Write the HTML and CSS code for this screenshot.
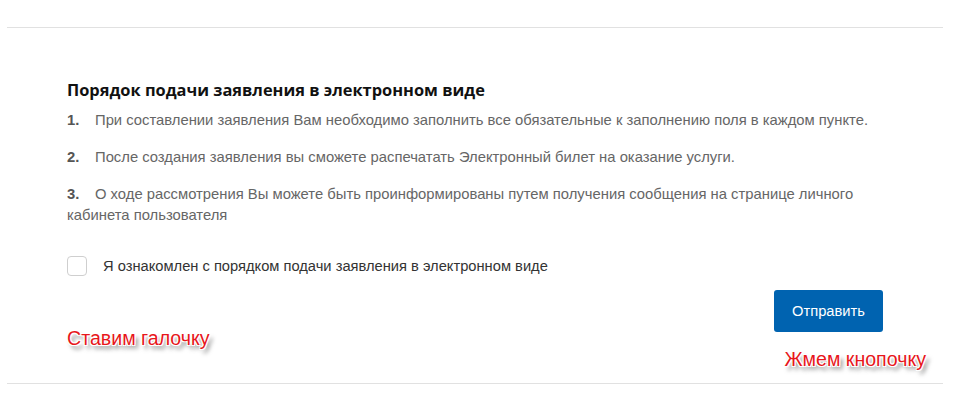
FILE: index.html
```html
<!DOCTYPE html>
<html>
<head>
  <meta charset="UTF-8">
  <title>Порядок подачи заявления</title>
  <link rel="stylesheet" href="styles.css">
</head>
<body>
  <div class="panel">
    <h2>Порядок подачи заявления в электронном виде</h2>
    <ol class="steps">
      <li><span class="num">1.</span>При составлении заявления Вам необходимо заполнить все обязательные к заполнению поля в каждом пункте.</li>
      <li><span class="num">2.</span>После создания заявления вы сможете распечатать Электронный билет на оказание услуги.</li>
      <li><span class="num">3.</span>О ходе рассмотрения Вы можете быть проинформированы путем получения сообщения на странице личного кабинета пользователя</li>
    </ol>
    <label class="agree">
      <span class="box"></span>
      Я ознакомлен с порядком подачи заявления в электронном виде
    </label>
    <div class="actions">
      <div class="note note-left">Ставим галочку</div>
      <div class="send">
        <button>Отправить</button>
        <div class="note">Жмем кнопочку</div>
      </div>
    </div>
  </div>
</body>
</html>
```

FILE: styles.css
```css
body {
  margin: 0;
  font-family: "Liberation Sans", Arial, sans-serif;
  background: #fff;
}
.panel {
  margin: 27px 23px 0 7px;
  border-top: 1px solid #e1e1e1;
  border-bottom: 1px solid #e1e1e1;
  padding: 50px 60px 0 60px;
}
h2 {
  margin: 0 0 9px;
  font-family: "Open Sans", sans-serif;
  font-weight: 700;
  font-size: 16.4px;
  color: #111;
}
.steps {
  list-style: none;
  margin: 0;
  padding: 0;
}
.steps li {
  font-size: 14.8px;
  line-height: 21px;
  color: #666;
  margin-bottom: 16px;
}
.num {
  display: inline-block;
  width: 28px;
  font-weight: bold;
  color: #555;
}
.agree {
  display: flex;
  align-items: center;
  font-size: 14.7px;
  color: #333;
  margin-top: 30px;
}
.box {
  width: 18px;
  height: 18px;
  border: 1px solid #cfcfcf;
  border-radius: 4px;
  margin-right: 16px;
}
.actions {
  display: flex;
  justify-content: space-between;
  align-items: flex-end;
  margin-top: 14px;
}
.note {
  color: #e8161b;
  font-size: 19.6px;
  text-shadow: -1px -1px 0 #fff, 1px -1px 0 #fff, -1px 1px 0 #fff, 1px 1px 0 #fff, 3px 4px 4px rgba(0, 0, 0, 0.55);
}
.note-left {
  margin-bottom: 33px;
}
.send {
  display: flex;
  flex-direction: column;
  align-items: flex-end;
  margin-right: -43px;
}
.send button {
  margin-right: 43px;
  width: 109px;
  height: 42px;
  background: #0063b0;
  color: #fff;
  border: none;
  border-radius: 3px;
  font-family: "Liberation Sans", Arial, sans-serif;
  font-size: 14.7px;
  cursor: pointer;
}
.send .note {
  margin-top: 16px;
  margin-bottom: 12px;
}
```
